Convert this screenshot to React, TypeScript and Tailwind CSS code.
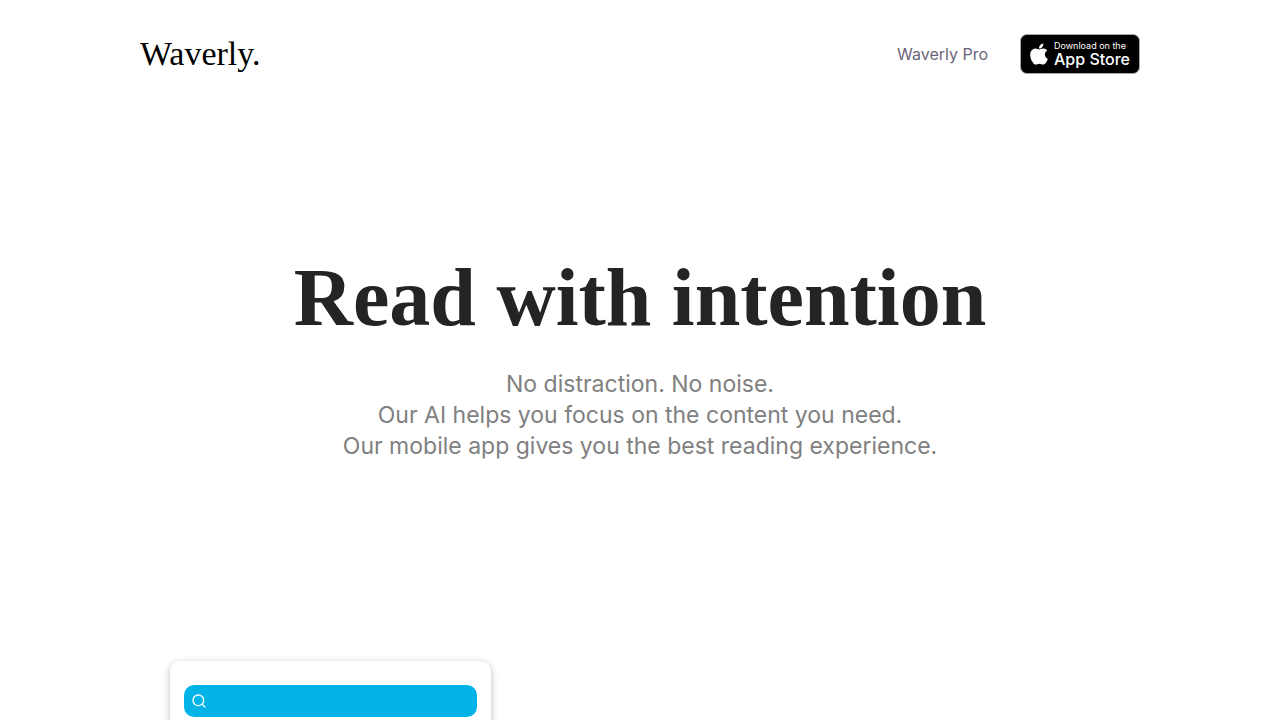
import { Search } from "lucide-react";

function AppleMark() {
  return (
    <svg viewBox="0 0 384 512" className="h-6 w-[18px] shrink-0" fill="currentColor" aria-hidden="true">
      <path d="M318.7 268.7c-.2-36.7 16.4-64.4 50-84.8-18.8-26.9-47.2-41.7-84.7-44.6-35.5-2.8-74.3 20.7-88.5 20.7-15 0-49.4-19.7-76.4-19.7C63.3 141.2 4 184.8 4 273.5q0 39.3 14.4 81.2c12.8 36.7 59 126.7 107.2 125.2 25.2-.6 43-17.9 75.8-17.9 31.8 0 48.3 17.9 76.4 17.9 48.6-.7 90.4-82.5 102.6-119.3-65.2-30.7-61.7-90-61.7-91.9zm-56.6-164.2c27.3-32.4 24.8-61.9 24-72.5-24.1 1.4-52 16.4-67.9 34.9-17.5 19.8-27.8 44.3-25.6 71.9 26.1 2 49.9-11.4 69.5-34.3z" />
    </svg>
  );
}

function Header() {
  return (
    <header className="mx-auto flex h-27 w-full max-w-[1000px] items-center justify-between">
      <a href="#home" className="font-['Liberation_Serif',serif] text-[34px] leading-10 text-black">
        Waverly.
      </a>
      <nav className="flex items-center gap-8">
        <a href="#pro" className="font-['Inter',sans-serif] text-base leading-6 text-[#6b6478]">
          Waverly Pro
        </a>
        <a
          href="#app-store"
          className="flex h-10 w-[120px] items-center gap-[6px] rounded-[7px] border border-[#a6a6a6] bg-black pl-[9px] font-['Inter',sans-serif] text-white"
        >
          <AppleMark />
          <span className="flex flex-col whitespace-nowrap">
            <span className="text-[9px] leading-[10px]">Download on the</span>
            <span className="text-base leading-4 font-medium">App Store</span>
          </span>
        </a>
      </nav>
    </header>
  );
}

function Hero() {
  return (
    <section className="flex flex-col items-center pt-[140px] pb-[199px] text-center">
      <h1 className="font-['Liberation_Serif',serif] text-[82px] leading-[100px] font-bold text-[#242424]">
        Read with intention
      </h1>
      <p className="mt-[21px] font-['Inter',sans-serif] text-[23px] leading-[31px] text-[#808080]">
        No distraction. No noise.
        <br />
        Our AI helps you focus on the content you need.
        <br />
        Our mobile app gives you the best reading experience.
      </p>
    </section>
  );
}

function Preview() {
  return (
    <section className="mx-auto w-full max-w-[940px]">
      <div className="min-h-80 w-full max-w-[321px] rounded-[10px] bg-white px-[14px] pt-6 shadow-[0_2px_7px_rgba(0,0,0,0.28)]">
        <label className="flex h-8 items-center gap-2 rounded-[10px] bg-[#02b3e8] px-[7px] text-white">
          <Search size={16} strokeWidth={2} aria-hidden="true" />
          <input type="search" aria-label="Search" className="min-w-0 flex-1 bg-transparent text-sm outline-none" />
        </label>
      </div>
    </section>
  );
}

export default function App() {
  return (
    <div className="min-h-screen bg-white">
      <Header />
      <main>
        <Hero />
        <Preview />
      </main>
    </div>
  );
}
